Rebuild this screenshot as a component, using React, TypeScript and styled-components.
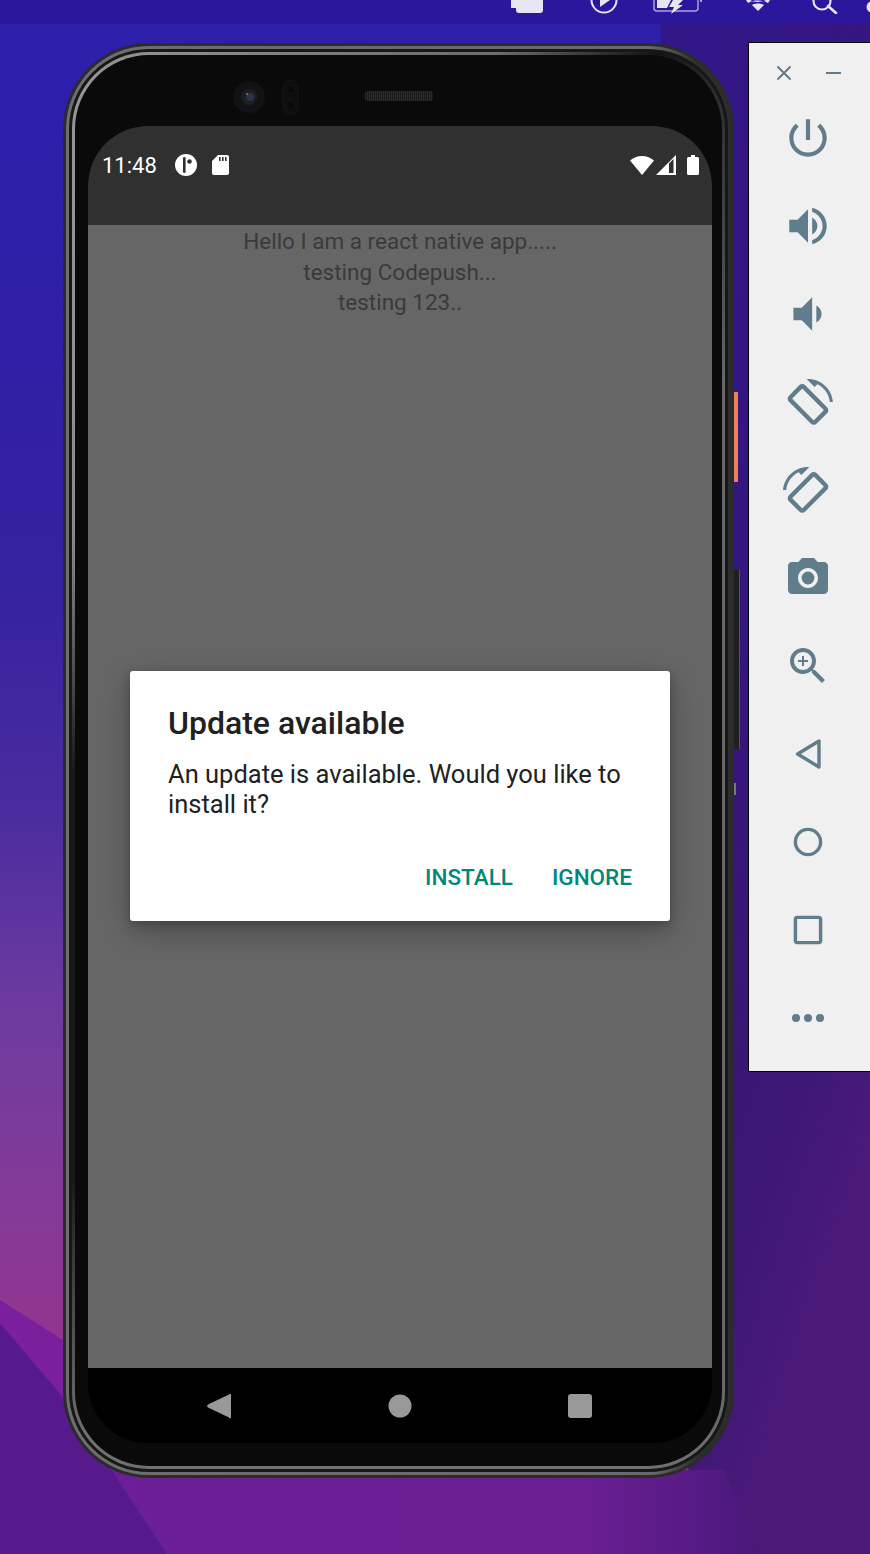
import React from 'react';
import styled, { createGlobalStyle } from 'styled-components';

const GlobalStyle = createGlobalStyle`
  html, body { margin: 0; padding: 0; background: #2c1fa6; }
  * { box-sizing: border-box; }
`

const Desktop = styled.div`
  position: relative;
  width: 870px;
  height: 1554px;
  overflow: hidden;
  font-family: Roboto, "Liberation Sans", sans-serif;
`
const Wallpaper = styled.svg`
  position: absolute;
  left: 0;
  top: 0;
  width: 870px;
  height: 1554px;
`
const MenuBar = styled.div`
  position: relative;
  height: 24px;
  background: #2a179b;
  display: flex;
  align-items: flex-start;
  padding-left: 511px;
  overflow: hidden;
`
const MenuGlyph = styled.svg<{ $gap?: number }>`
  display: block;
  flex: none;
  height: 14px;
  margin-left: ${p => p.$gap || 0}px;
`
const Workspace = styled.div`
  position: relative;
  display: flex;
  align-items: flex-start;
  padding: 18px 0 0 63px;
`
const PhoneShell = styled.div`
  position: relative;
  flex: none;
  width: 671px;
  height: 1435px;
  margin-top: 1px;
  padding: 3px;
  border-radius: 86px;
  background: #2b2b2b;
`
const OuterRim = styled.div`
  height: 100%;
  padding: 3px;
  border-radius: 83px;
  background: linear-gradient(90deg, #6e6e6e 0, #6a6a6a 88%, #2d2d2d 95%, #2d2d2d 100%);
`
const Groove = styled.div`
  height: 100%;
  padding: 3px;
  border-radius: 80px;
  background: #171717;
`
const InnerRim = styled.div`
  height: 100%;
  padding: 3px;
  border-radius: 77px;
  background: conic-gradient(#747474 0deg, #6e6e6e 8deg, #141414 20deg, #333 27deg, #666 40deg, #666 150deg, #707070 160deg, #707070 205deg, #181818 218deg, #181818 268deg, #8a8a8a 305deg, #969696 335deg, #747474 360deg);
`
const Bezel = styled.div`
  position: relative;
  height: 100%;
  padding: 71px 10px 23px 13px;
  border-radius: 74px;
  background: #0a0a0b;
`
const FrontCamera = styled.svg`
  position: absolute;
  left: 158px;
  top: 24px;
`
const Speaker = styled.div`
  position: absolute;
  left: 290px;
  top: 36px;
  width: 68px;
  height: 10px;
  border-radius: 3px;
  background: repeating-linear-gradient(90deg, #2b2b2b 0 1px, #1a1a1a 1px 2px);
`
const SideKey = styled.div<{ $top: number; $h: number; $w: number; $c: string; $edge?: string }>`
  position: absolute;
  left: 671px;
  top: ${p => p.$top}px;
  width: ${p => p.$w}px;
  height: ${p => p.$h}px;
  background: ${p => p.$c};
  border-right: 1px solid ${p => p.$edge || p.$c};
`
const Screen = styled.div`
  height: 100%;
  display: flex;
  flex-direction: column;
  overflow: hidden;
  border-radius: 60px;
  background: #000;
`
const StatusBar = styled.div`
  flex: none;
  height: 99px;
  background: #303030;
  display: flex;
  align-items: center;
  justify-content: space-between;
  padding: 0 13px 21px 14px;
  color: #fff;
`
const StatusGroup = styled.div<{ $gap: number }>`
  display: flex;
  align-items: center;
  gap: ${p => p.$gap}px;
`
const Clock = styled.span`
  font-size: 22px;
  line-height: 28px;
  margin-top: 2px;
  margin-right: 3px;
`
const AppArea = styled.div`
  position: relative;
  flex: 1;
  background: #666;
  padding-top: 1px;
`
const Line = styled.div`
  text-align: center;
  font-size: 22.5px;
  line-height: 30.5px;
  color: #3a3a3a;
`
const Overlay = styled.div`
  position: absolute;
  inset: 0;
  padding-bottom: 1px;
  display: flex;
  align-items: center;
  justify-content: center;
`
const Dialog = styled.div`
  width: 540px;
  height: 250px;
  background: #fff;
  border-radius: 3px;
  padding: 33px 38px 0;
  box-shadow: 0 10px 28px rgba(0, 0, 0, 0.28), 0 2px 8px rgba(0, 0, 0, 0.2);
  display: flex;
  flex-direction: column;
`
const DialogTitle = styled.div`
  font-size: 32px;
  line-height: 38px;
  font-weight: 500;
  color: #212121;
`
const DialogBody = styled.div`
  margin-top: 17px;
  font-size: 25.5px;
  line-height: 30px;
  color: #212121;
`
const DialogActions = styled.div`
  margin-top: 43px;
  display: flex;
  justify-content: flex-end;
  gap: 39px;
`
const DialogButton = styled.div`
  font-size: 22.5px;
  line-height: 30px;
  font-weight: 500;
  color: #00877a;
`
const NavBar = styled.div`
  flex: none;
  height: 75px;
  background: #000;
  display: grid;
  grid-template-columns: repeat(3, 180px);
  justify-content: center;
  align-items: center;
`
const NavKey = styled.div`
  display: flex;
  justify-content: center;
  svg { display: block; }
`
const Toolbar = styled.div`
  flex: none;
  width: 122px;
  height: 1030px;
  margin-left: 14px;
  padding-right: 3px;
  background: #f0f0f0;
  border: 1px solid #000;
  border-right: 0;
`
const ToolbarTop = styled.div`
  height: 51px;
  display: flex;
  align-items: center;
  justify-content: space-between;
  padding: 8px 26px 0 27px;
`
const ToolButton = styled.div`
  height: 88px;
  display: flex;
  align-items: center;
  justify-content: center;
`
const RotateButton = styled(ToolButton)`
  padding-top: 4px;
`
const Icon = styled.svg<{ $mirror?: boolean }>`
  display: block;
  fill: #607d8b;
  transform: ${p => (p.$mirror ? 'scaleX(-1)' : 'none')};
`

const Tool: React.FC<{ d: string; size?: number }> = ({ d, size = 50 }) => (
  <ToolButton>
    <Icon viewBox="0 0 24 24" width={size} height={size}><path d={d} /></Icon>
  </ToolButton>
)

const RotateTool: React.FC<{ mirror?: boolean }> = ({ mirror }) => (
  <RotateButton>
    <Icon viewBox="0 0 24 24" width={50} height={50} $mirror={mirror}>
      <path d="M16.48 2.52c3.27 1.55 5.61 4.72 5.97 8.48h1.5C23.44 4.84 18.29 0 12 0l-.66.03 3.81 3.81 1.33-1.32z" />
      <rect x="7.500" y="3.800" width="9" height="16.800" rx="1" transform="rotate(-45 12 12.200)" fill="none" stroke="#607d8b" strokeWidth="2.100" />
    </Icon>
  </RotateButton>
)

const Outline: React.FC<{ children: React.ReactNode }> = ({ children }) => (
  <ToolButton>
    <svg viewBox="0 0 24 24" width={48} height={48} fill="none" stroke="#607d8b" strokeWidth={1.7} strokeLinejoin="round">{children}</svg>
  </ToolButton>
)

const App: React.FC = () => {
  return (
    <Desktop>
      <GlobalStyle />
      <Wallpaper viewBox="0 0 870 1554">
        <defs>
          <linearGradient id="leftWall" x1="0" y1="0" x2="0" y2="1">
            <stop offset="0" stopColor="#2c20ac" />
            <stop offset="0.2" stopColor="#2e1fa6" />
            <stop offset="0.38" stopColor="#35229f" />
            <stop offset="0.52" stopColor="#4a2c9e" />
            <stop offset="0.65" stopColor="#6d3b9e" />
            <stop offset="0.78" stopColor="#853a97" />
            <stop offset="0.86" stopColor="#92358f" />
            <stop offset="1" stopColor="#92358f" />
          </linearGradient>
          <linearGradient id="rightWall" x1="0" y1="0" x2="0.4" y2="1">
            <stop offset="0" stopColor="#33178a" />
            <stop offset="0.5" stopColor="#35167f" />
            <stop offset="0.72" stopColor="#3a1674" />
            <stop offset="0.85" stopColor="#3f1877" />
            <stop offset="1" stopColor="#4b1a79" />
          </linearGradient>
          <linearGradient id="floor" x1="0" y1="0" x2="1" y2="0">
            <stop offset="0" stopColor="#6c1f96" />
            <stop offset="0.75" stopColor="#691f92" />
            <stop offset="0.93" stopColor="#531a82" />
            <stop offset="1" stopColor="#461979" />
          </linearGradient>
        </defs>
        <rect width="870" height="1554" fill="url(#leftWall)" />
        <polygon points="660,0 870,0 870,1554 690,1554" fill="url(#rightWall)" />
        <polygon points="0,1300 63,1340 63,1397 0,1323" fill="#7a209c" />
        <polygon points="63,1470 725,1470 760,1554 63,1554" fill="url(#floor)" />
        <polygon points="0,1323 63,1397 167,1554 0,1554" fill="#561a8c" />
      </Wallpaper>

      <MenuBar>
        <MenuGlyph viewBox="0 0 32 14" width={32}>
          <path d="M0 0h5v8H0zM5 0h27v10a3 3 0 0 1-3 3H8a3 3 0 0 1-3-3z" fill="#e8e4f4" />
        </MenuGlyph>
        <MenuGlyph viewBox="0 6 28 14" width={28} $gap={47}>
          <circle cx="14" cy="6" r="12.500" fill="none" stroke="#e8e4f4" strokeWidth="2" />
          <path d="M10 6h10l-10 7z" fill="#e8e4f4" />
        </MenuGlyph>
        <MenuGlyph viewBox="0 0 50 14" width={50} $gap={35}>
          <path d="M1 0v8a3 3 0 0 0 3 3h38a3 3 0 0 0 3-3V0" fill="none" stroke="#a9a2dc" strokeWidth="1.500" />
          <path d="M4 0h14l-4 8H4z" fill="#e8e4f4" />
          <path d="M20 0h10l-5 5h5L18 14l3-7h-5z" fill="#e8e4f4" />
          <path d="M47 0h2v2h-2z" fill="#a9a2dc" />
        </MenuGlyph>
        <MenuGlyph viewBox="0 0 24 14" width={24} $gap={43}>
          <path d="M0 0h4c2 1 5 2 8 2s6-1 8-2h4l-2 3C19 1 16 .5 12 .5S5 1 2 3zM6 5c3-2 9-2 12 0l-6 6z" fill="#e8e4f4" />
        </MenuGlyph>
        <MenuGlyph viewBox="0 0 27 14" width={27} $gap={42}>
          <circle cx="10" cy="1" r="8.500" fill="none" stroke="#e8e4f4" strokeWidth="2.200" />
          <path d="M16 6l8 7" stroke="#e8e4f4" strokeWidth="2.600" strokeLinecap="round" />
        </MenuGlyph>
        <MenuGlyph viewBox="0 0 10 14" width={10} $gap={27}>
          <circle cx="6" cy="7" r="5.500" fill="#e8e4f4" />
        </MenuGlyph>
      </MenuBar>

      <Workspace>
        <PhoneShell>
          <OuterRim>
            <Groove>
              <InnerRim>
                <Bezel>
                  <FrontCamera viewBox="0 0 66 36" width={66} height={36}>
                    <circle cx="16" cy="18" r="16" fill="#121214" />
                    <circle cx="16" cy="18" r="8" fill="#1c1e22" />
                    <circle cx="17" cy="18" r="4" fill="#2a3448" />
                    <circle cx="14" cy="15" r="1" fill="#777" />
                    <rect x="50" y="1" width="15" height="34" rx="7.500" fill="#0e0e10" stroke="#161618" />
                    <circle cx="57.500" cy="10" r="4.500" fill="#0a0a0b" stroke="#161618" />
                    <circle cx="57.500" cy="26" r="4.500" fill="#0a0a0b" stroke="#161618" />
                  </FrontCamera>
                  <Speaker />
                  <Screen>
                    <StatusBar>
                      <StatusGroup $gap={15}>
                        <Clock>11:48</Clock>
                        <svg viewBox="0 0 22 22" width={22} height={22}>
                          <circle cx="11" cy="11" r="11" fill="#fff" />
                          <rect x="8" y="3" width="2.600" height="16" rx="1.300" fill="#303030" />
                          <circle cx="14.500" cy="7.500" r="2.300" fill="#303030" />
                        </svg>
                        <svg viewBox="0 0 17 20" width={17} height={20}>
                          <path d="M6 0h9a2 2 0 0 1 2 2v16a2 2 0 0 1-2 2H2a2 2 0 0 1-2-2V6z" fill="#fff" />
                          <path d="M7 2h1.600v4H7zM10 2h1.600v4H10zM13 2h1.600v4H13z" fill="#303030" />
                        </svg>
                      </StatusGroup>
                      <StatusGroup $gap={2}>
                        <svg viewBox="0 0 24 19" width={24} height={19}>
                          <path d="M12 19L0 4.500C3.200 1.800 7.400 0 12 0s8.800 1.800 12 4.500z" fill="#fff" />
                        </svg>
                        <svg viewBox="0 0 20 20" width={20} height={20}>
                          <path d="M0 20L20 0v20z" fill="#fff" />
                          <path d="M13 8.500L17.500 4v14H13z" fill="#303030" />
                        </svg>
                        <svg viewBox="0 0 12 20" width={12} height={20} style={{ marginLeft: 9 }}>
                          <path d="M4 0h4v2h2.500A1.500 1.500 0 0 1 12 3.500v15a1.500 1.500 0 0 1-1.500 1.500h-9A1.500 1.500 0 0 1 0 18.500v-15A1.500 1.500 0 0 1 1.500 2H4z" fill="#fff" />
                        </svg>
                      </StatusGroup>
                    </StatusBar>
                    <AppArea>
                      <Line>Hello I am a react native app.....</Line>
                      <Line>testing Codepush...</Line>
                      <Line>testing 123..</Line>
                      <Overlay>
                        <Dialog>
                          <DialogTitle>Update available</DialogTitle>
                          <DialogBody>An update is available. Would you like to install it?</DialogBody>
                          <DialogActions>
                            <DialogButton>INSTALL</DialogButton>
                            <DialogButton>IGNORE</DialogButton>
                          </DialogActions>
                        </Dialog>
                      </Overlay>
                    </AppArea>
                    <NavBar>
                      <NavKey>
                        <svg viewBox="0 0 26 26" width={26} height={26}>
                          <path d="M22 1.500a1 1 0 0 1 2 .5v22a1 1 0 0 1-2 .6L1 14.500a1.800 1.800 0 0 1 0-3z" fill="#999" />
                        </svg>
                      </NavKey>
                      <NavKey>
                        <svg viewBox="0 0 24 24" width={24} height={24}><circle cx="12" cy="12" r="11.500" fill="#999" /></svg>
                      </NavKey>
                      <NavKey>
                        <svg viewBox="0 0 24 24" width={24} height={24}><rect width="24" height="24" rx="3" fill="#999" /></svg>
                      </NavKey>
                    </NavBar>
                  </Screen>
                </Bezel>
              </InnerRim>
            </Groove>
          </OuterRim>
          <SideKey $top={349} $h={90} $w={4} $c="#ee7f5d" />
          <SideKey $top={527} $h={179} $w={6} $c="#1f1f1f" $edge="#555" />
          <SideKey $top={740} $h={12} $w={2} $c="#777" />
        </PhoneShell>

        <Toolbar>
          <ToolbarTop>
            <svg viewBox="0 0 16 16" width={16} height={16}>
              <path d="M1.500 1.500l13 13M14.500 1.500l-13 13" stroke="#607d8b" strokeWidth="2" fill="none" />
            </svg>
            <svg viewBox="0 0 15 16" width={15} height={16}>
              <path d="M0 8h15" stroke="#607d8b" strokeWidth="2" fill="none" />
            </svg>
          </ToolbarTop>
          <Tool d="M13 3h-2v10h2V3zm4.830 2.170l-1.420 1.420C17.990 7.860 19 9.810 19 12c0 3.870-3.130 7-7 7s-7-3.130-7-7c0-2.190 1.010-4.140 2.580-5.420L6.170 5.170C4.230 6.820 3 9.260 3 12c0 4.970 4.030 9 9 9s9-4.030 9-9c0-2.740-1.230-5.180-3.170-6.830z" />
          <Tool d="M3 9v6h4l5 5V4L7 9H3zm13.500 3c0-1.770-1.020-3.290-2.500-4.030v8.050c1.480-.73 2.500-2.250 2.500-4.020zM14 3.230v2.060c2.890.86 5 3.540 5 6.710s-2.110 5.850-5 6.710v2.060c4.010-.91 7-4.490 7-8.770s-2.990-7.860-7-8.770z" />
          <Tool d="M18.500 12c0-1.770-1.020-3.290-2.500-4.030v8.050c1.480-.73 2.500-2.250 2.500-4.020zM5 9v6h4l5 5V4L9 9H5z" />
          <RotateTool />
          <RotateTool mirror />
          <Tool size={48} d="M9 2L7.170 4H4c-1.100 0-2 .9-2 2v12c0 1.100.9 2 2 2h16c1.100 0 2-.9 2-2V6c0-1.100-.9-2-2-2h-3.170L15 2H9zm3 15c-2.760 0-5-2.240-5-5s2.240-5 5-5 5 2.240 5 5-2.240 5-5 5zM12 8.800a3.200 3.200 0 1 0 0 6.400 3.200 3.200 0 0 0 0-6.400z" />
          <Tool size={48} d="M15.500 14h-.79l-.28-.27C15.410 12.590 16 11.110 16 9.500 16 5.910 13.090 3 9.500 3S3 5.910 3 9.500 5.910 16 9.500 16c1.610 0 3.090-.59 4.230-1.570l.27.28v.79l5 4.990L20.490 19l-4.990-5zm-6 0C7.010 14 5 11.990 5 9.500S7.010 5 9.500 5 14 7.010 14 9.500 11.990 14 9.500 14zM12 10h-2v2H9v-2H7V9h2V7h1v2h2v1z" />
          <Outline><path d="M17.500 5.500v13L6.800 12z" /></Outline>
          <Outline><circle cx="12" cy="12" r="6.300" /></Outline>
          <Outline><rect x="5.700" y="5.700" width="12.600" height="12.600" rx="1" /></Outline>
          <ToolButton>
            <svg viewBox="0 0 32 8" width={32} height={8}>
              <circle cx="4" cy="4" r="4" fill="#607d8b" />
              <circle cx="16" cy="4" r="4" fill="#607d8b" />
              <circle cx="28" cy="4" r="4" fill="#607d8b" />
            </svg>
          </ToolButton>
        </Toolbar>
      </Workspace>
    </Desktop>
  )
}

export default App
